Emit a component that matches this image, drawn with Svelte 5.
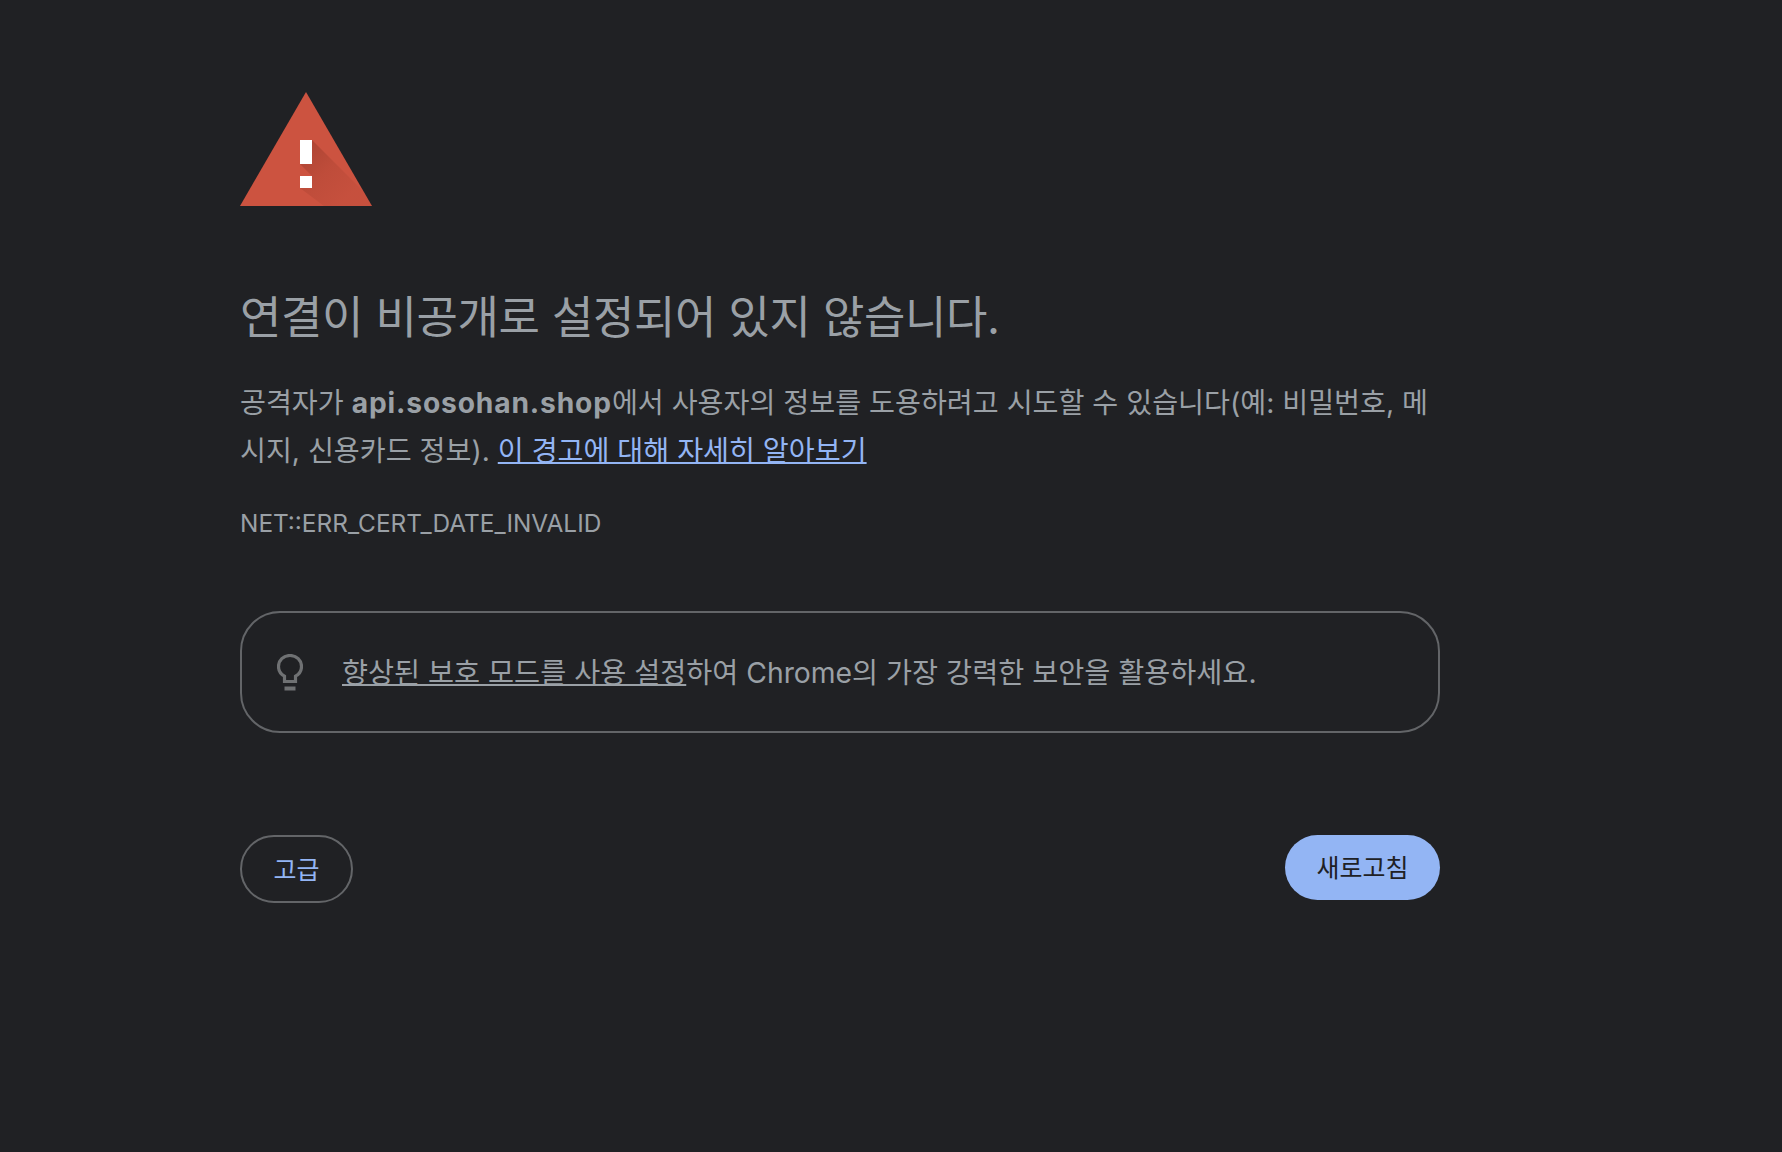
<script>
  let domain = "api.sosohan.shop";
  let errorCode = "NET::ERR_CERT_DATE_INVALID";
</script>

<main class="page">
  <div class="warning-icon">
    <svg width="132" height="114" viewBox="0 0 132 114">
      <defs>
        <clipPath id="tri"><path d="M66 0 L132 114 L0 114 Z" /></clipPath>
        <linearGradient id="shade" gradientUnits="userSpaceOnUse" x1="60" y1="48" x2="112" y2="100">
          <stop offset="0" stop-color="#8f3526" stop-opacity="0.55" />
          <stop offset="0.55" stop-color="#8f3526" stop-opacity="0.22" />
          <stop offset="1" stop-color="#8f3526" stop-opacity="0.1" />
        </linearGradient>
      </defs>
      <path d="M66 0 L132 114 L0 114 Z" fill="#cc5340" />
      <g clip-path="url(#tri)">
        <path d="M72 48 L138 114 L84 114 L60 96 L72 84 L60 72 Z" fill="url(#shade)" />
      </g>
      <rect x="60" y="48" width="12" height="24" fill="#fff" />
      <rect x="60" y="84" width="12" height="12" fill="#fff" />
    </svg>
  </div>

  <h1>연결이 비공개로 설정되어 있지 않습니다.</h1>

  <p class="desc">
    공격자가 <strong>{domain}</strong>에서 사용자의 정보를 도용하려고 시도할 수 있습니다(예: 비밀번호, 메시지, 신용카드 정보). <a href="#learn">이 경고에 대해 자세히 알아보기</a>
  </p>

  <div class="code">{errorCode}</div>

  <div class="tip">
    <svg class="bulb" width="26" height="37" viewBox="0 0 26 37">
      <path d="M13 1.5 C6.4 1.5 1.5 6.4 1.5 12.5 C1.5 17 4 20.4 7.5 22.2 L7.5 27.5 L18.5 27.5 L18.5 22.2 C22 20.4 24.5 17 24.5 12.5 C24.5 6.4 19.6 1.5 13 1.5 Z" fill="none" stroke="#6f7173" stroke-width="3.2" />
      <rect x="7.5" y="32.5" width="11" height="4" fill="#6f7173" />
    </svg>
    <span class="tip-text"><a href="#protect">향상된 보호 모드를 사용 설정</a>하여 Chrome의 가장 강력한 보안을 활용하세요.</span>
  </div>

  <div class="actions">
    <button class="secondary"><span>고급</span></button>
    <button class="primary"><span>새로고침</span></button>
  </div>
</main>

<style>
  :global(body) {
    margin: 0;
    background: #202124;
  }
  .page {
    box-sizing: border-box;
    width: 1782px;
    height: 1152px;
    padding: 92px 342px 0 240px;
    font-family: Inter, "Noto Sans CJK KR", sans-serif;
    color: #9aa0a6;
    font-size: 28.2px;
  }
  .warning-icon {
    height: 114px;
    line-height: 0;
  }
  h1 {
    margin: 82px 0 0;
    font-size: 45px;
    font-weight: 400;
    line-height: 60px;
    letter-spacing: -0.35px;
  }
  .desc {
    margin: 31px 0 0;
    line-height: 48px;
    word-break: break-all;
  }
  .desc strong {
    font-weight: 700;
    letter-spacing: 0.85px;
  }
  .desc a {
    color: #93b5f4;
    text-decoration: underline;
    text-decoration-thickness: 2px;
  }
  .code {
    margin-top: 30px;
    font-size: 24.4px;
    line-height: 36px;
  }
  .tip {
    box-sizing: border-box;
    display: flex;
    align-items: center;
    gap: 39px;
    height: 122px;
    margin-top: 70px;
    padding-left: 35px;
    border: 2px solid #636568;
    border-radius: 40px;
    font-size: 28.3px;
  }
  .tip-text {
    margin-top: -3px;
  }
  .tip a {
    color: #9aa0a6;
    text-decoration: underline;
    text-decoration-thickness: 2px;
  }
  .actions {
    display: flex;
    justify-content: space-between;
    align-items: flex-start;
    margin-top: 102px;
  }
  button {
    font-family: inherit;
    font-size: 25px;
    border-radius: 34px;
    padding: 0;
  }
  button span {
    display: block;
    margin-top: -3px;
  }
  .secondary {
    width: 113px;
    height: 68px;
    background: transparent;
    border: 2px solid #636568;
    color: #93b5f4;
  }
  .primary {
    width: 155px;
    height: 65px;
    background: #93b5f4;
    border: none;
    color: #202124;
  }
</style>
